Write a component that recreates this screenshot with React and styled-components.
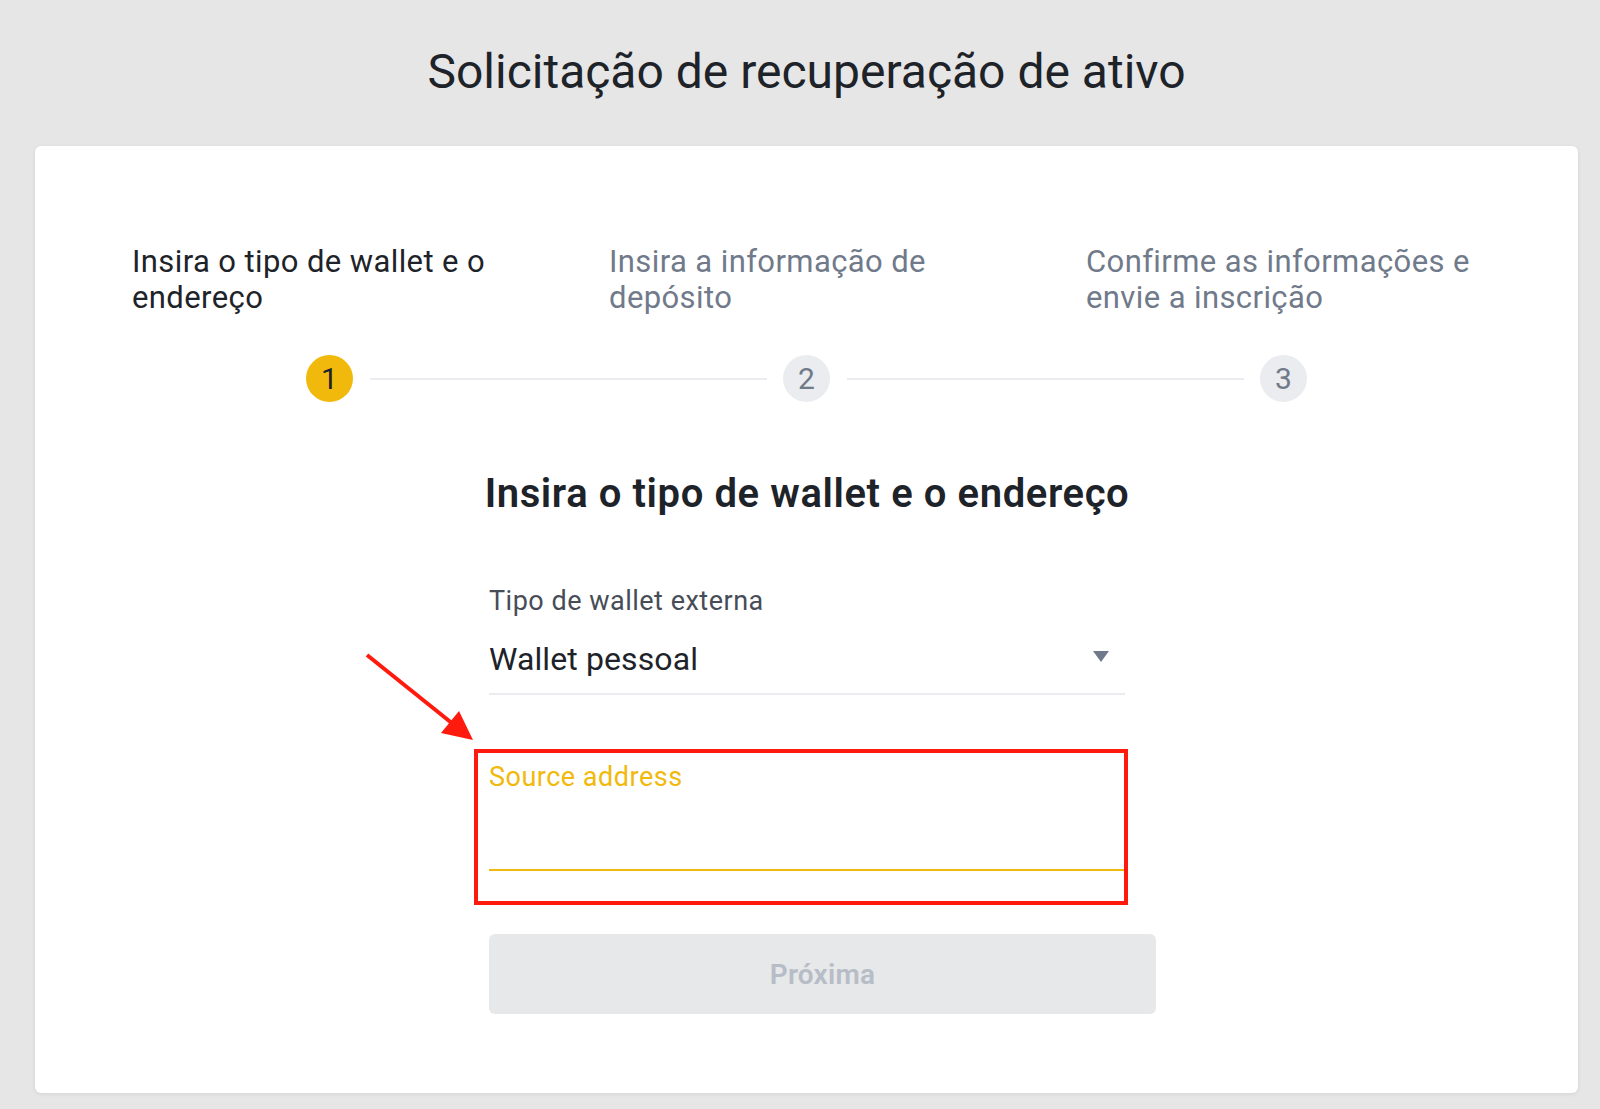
import React from "react";
import styled, { createGlobalStyle } from "styled-components";

const GlobalStyle = createGlobalStyle`
  html, body {
    margin: 0;
    padding: 0;
    background: #e6e6e6;
  }
  body {
    font-family: Roboto, "Noto Sans", "Liberation Sans", sans-serif;
    color: #1e2329;
  }
  * { box-sizing: border-box; }
`;

const Page = styled.div`
  width: 1600px;
  min-height: 1109px;
  padding: 44px 0 16px 35px;
`;

const Column = styled.div`
  width: 1543px;
`;

const Title = styled.h1`
  margin: 0 0 46px;
  text-align: center;
  font-size: 48px;
  line-height: 56px;
  font-weight: 400;
  color: #1e2329;
`;

const Card = styled.div`
  background: #fff;
  border-radius: 6px;
  box-shadow: 0 1px 4px rgba(0, 0, 0, 0.08);
  padding: 98px 0 79px 97px;
`;

const StepLabels = styled.div`
  display: grid;
  grid-template-columns: repeat(3, 477px);
`;

const StepLabel = styled.div`
  max-width: 405px;
  font-size: 31px;
  line-height: 36px;
  letter-spacing: 0.4px;
  color: ${(p) => (p.$active ? "#1e2329" : "#707a8a")};
`;

const StepTrack = styled.div`
  display: flex;
  align-items: center;
  gap: 16.5px;
  width: 1001px;
  margin: 39px 0 0 174px;
`;

const Circle = styled.div`
  flex: none;
  width: 47px;
  height: 47px;
  border-radius: 50%;
  display: flex;
  align-items: center;
  justify-content: center;
  font-size: 30px;
  background: ${(p) => (p.$active ? "#f0b90b" : "#eaecef")};
  color: ${(p) => (p.$active ? "#1e2329" : "#707a8a")};
`;

const TrackLine = styled.div`
  flex: 1;
  height: 2px;
  background: #eaecef;
`;

const Body = styled.div`
  width: 636px;
  margin: 70px 0 0 ${489 - 132}px;
`;

const Heading = styled.h2`
  margin: 0 -60px 69px;
  white-space: nowrap;
  font-size: 40px;
  line-height: 44px;
  font-weight: 600;
  letter-spacing: 0.6px;
  text-align: center;
  color: #1e2329;
`;

const FieldLabel = styled.div`
  font-size: 27px;
  line-height: 32px;
  letter-spacing: 0.5px;
  color: ${(p) => (p.$focused ? "#f0b90b" : "#474d57")};
`;

const Select = styled.div`
  display: flex;
  align-items: center;
  justify-content: space-between;
  margin-top: 22px;
  padding: 0 16px 14px 0;
  border-bottom: 2px solid #eaecef;
`;

const SelectValue = styled.div`
  font-size: 32px;
  line-height: 40px;
  letter-spacing: 0.1px;
  color: #1e2329;
`;

const Caret = styled.div`
  width: 0;
  height: 0;
  border-left: 8px solid transparent;
  border-right: 8px solid transparent;
  border-top: 11px solid #707a8a;
  margin-top: -6px;
`;

const SourceField = styled.div`
  position: relative;
  margin-top: 54px;
  padding: 12px 0 34px;
`;

const AddressInput = styled.input`
  display: block;
  width: 100%;
  height: 78px;
  border: none;
  border-bottom: 2px solid #f0b90b;
  outline: none;
  background: transparent;
  font-family: inherit;
  font-size: 28px;
  color: #1e2329;
`;

const Highlight = styled.div`
  position: absolute;
  top: 0;
  bottom: 0;
  left: -15px;
  right: -3px;
  border: 4px solid #ff1a0e;
  pointer-events: none;
`;

const Arrow = styled.svg`
  position: absolute;
  left: -126px;
  top: -98px;
  overflow: visible;
  pointer-events: none;
`;

const NextButton = styled.button`
  display: block;
  width: 667px;
  height: 80px;
  margin-top: 29px;
  border: none;
  border-radius: 6px;
  background: #e6e8ea;
  color: #b7bdc6;
  font-family: inherit;
  font-size: 28px;
  font-weight: 600;
  letter-spacing: 0.2px;
  cursor: not-allowed;
`;

const steps = [
  "Insira o tipo de wallet e o endereço",
  "Insira a informação de depósito",
  "Confirme as informações e envie a inscrição",
];

export default function App() {
  const current = 0;
  return (
    <>
      <GlobalStyle />
      <Page>
        <Column>
          <Title>Solicitação de recuperação de ativo</Title>
          <Card>
            <StepLabels>
              {steps.map((s, i) => (
                <StepLabel key={s} $active={i === current}>
                  {s}
                </StepLabel>
              ))}
            </StepLabels>
            <StepTrack>
              {steps.map((s, i) => (
                <React.Fragment key={s}>
                  {i > 0 && <TrackLine />}
                  <Circle $active={i === current}>{i + 1}</Circle>
                </React.Fragment>
              ))}
            </StepTrack>
            <Body>
              <Heading>Insira o tipo de wallet e o endereço</Heading>
              <FieldLabel>Tipo de wallet externa</FieldLabel>
              <Select>
                <SelectValue>Wallet pessoal</SelectValue>
                <Caret />
              </Select>
              <SourceField>
                <FieldLabel $focused>Source address</FieldLabel>
                <AddressInput aria-label="Source address" />
                <Highlight />
                <Arrow width="110" height="90" viewBox="0 0 110 90">
                  <line x1="4" y1="4" x2="90" y2="73" stroke="#ff1a0e" strokeWidth="4" />
                  <polygon points="110,89 78,82 96,60" fill="#ff1a0e" />
                </Arrow>
              </SourceField>
              <NextButton disabled>Próxima</NextButton>
            </Body>
          </Card>
        </Column>
      </Page>
    </>
  );
}
